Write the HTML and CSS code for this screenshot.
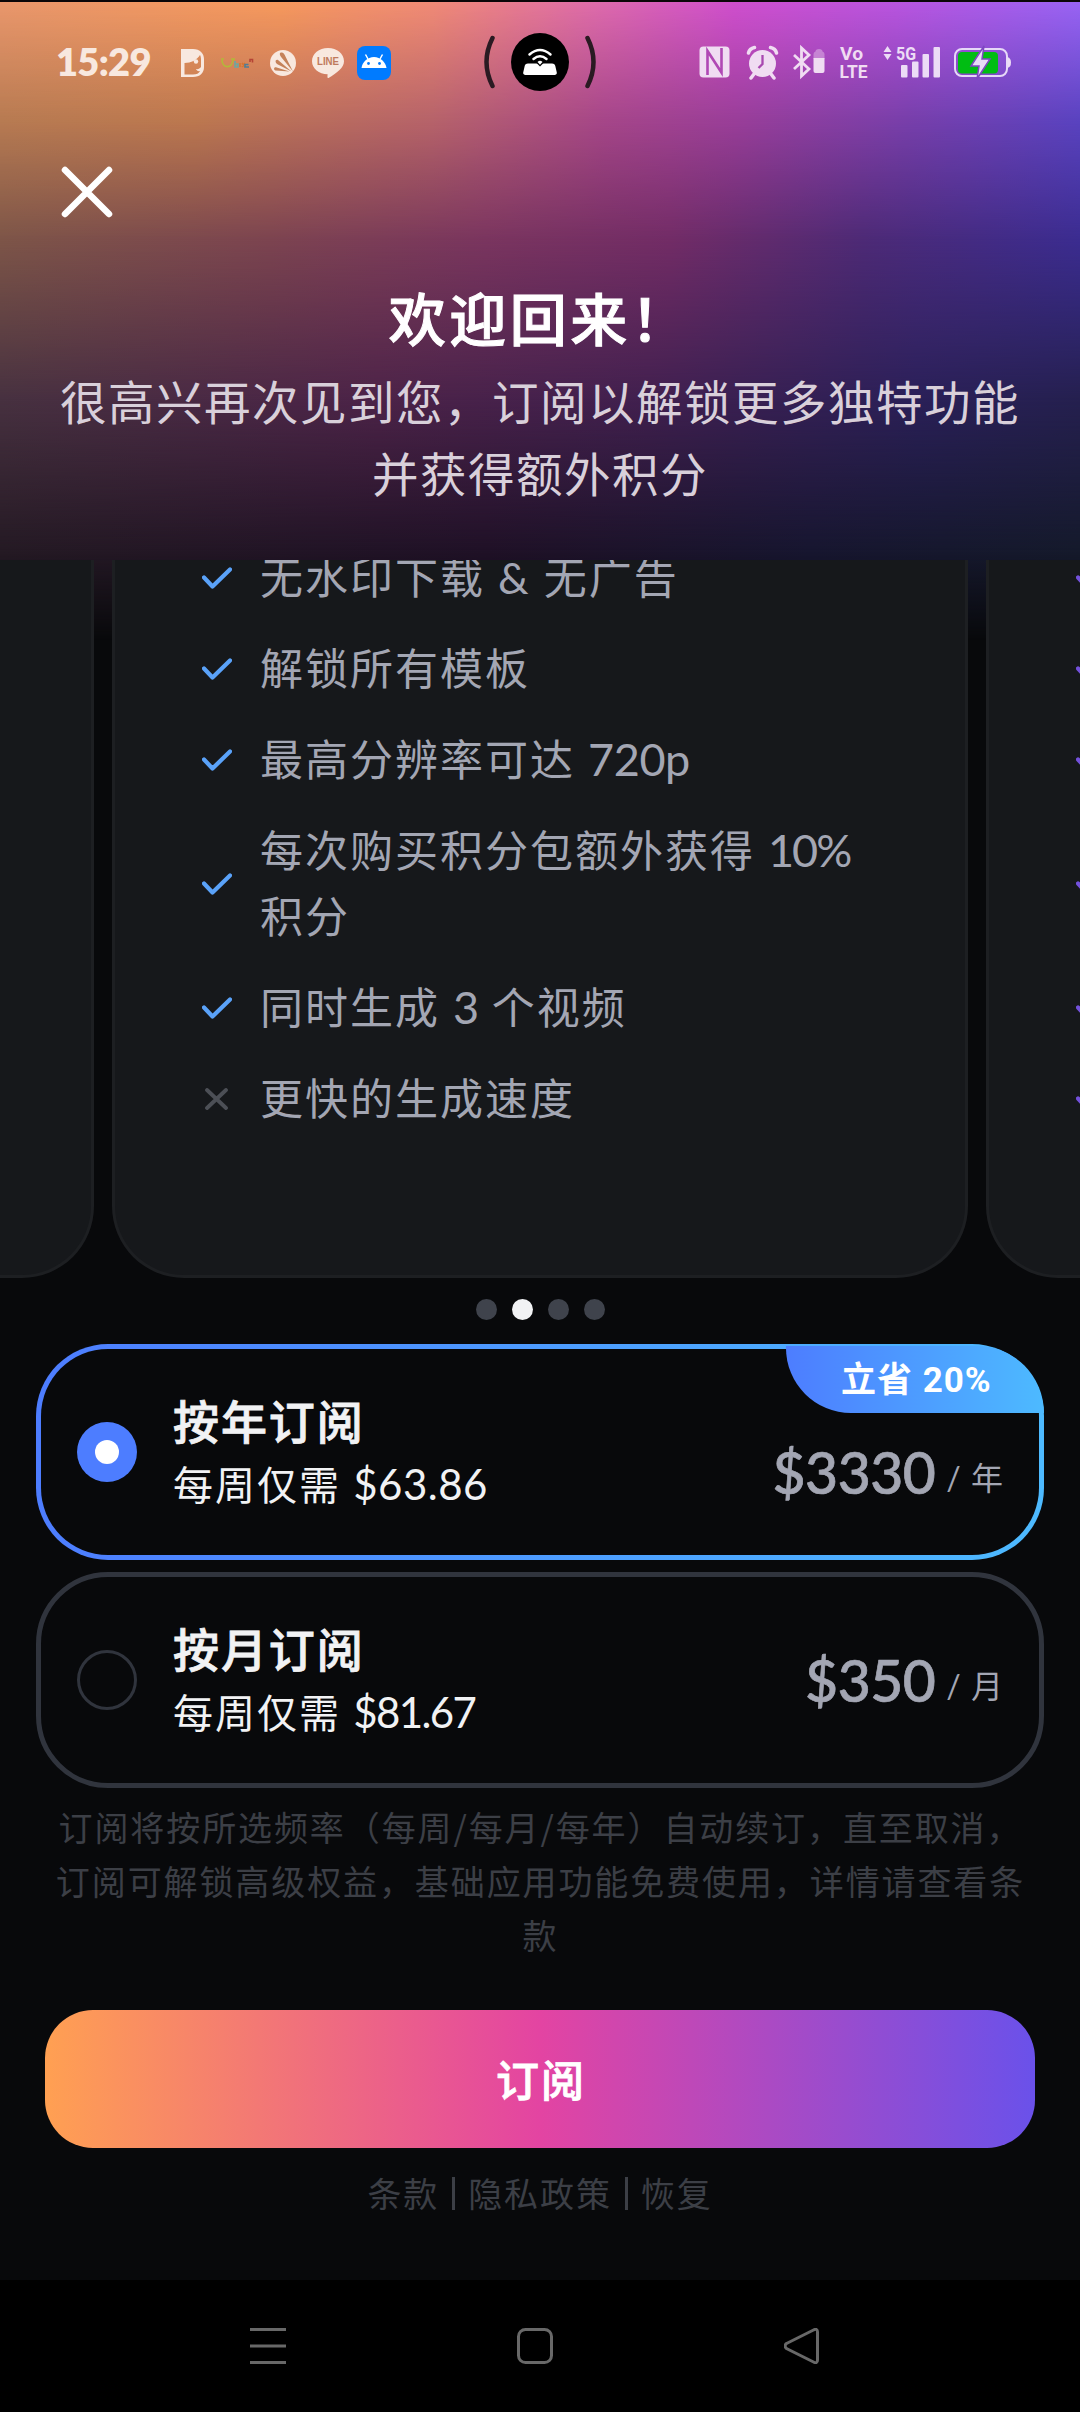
FILE: index.html
```html
<!DOCTYPE html>
<html lang="zh-CN">
<head>
<meta charset="utf-8">
<title>订阅</title>
<link rel="stylesheet" href="styles.css">
</head>
<body>
<main class="screen">
  <div class="glow"><i class="g5"></i><i class="g4"></i><i class="g3"></i><i class="g2"></i><i class="g1"></i></div>
  <header class="hero">
    <div class="status">
      <span class="clock">15:29</span>
      <svg class="notifs" width="216" height="40" viewBox="178 42 216 40">
        <g fill="#f8e8df">
          <path fill-rule="evenodd" d="M181 49h12c7 0 11 4.500 11 10v8c0 6-4 10-11 10h-12zM184.500 63v11.500h8.500c3.500 0 6-1 7-3.500-2 .5-3.500-.5-4-2 2 .5 4-.5 5-2v-8c0-1.500-.5-3-1-4-3 5-9 8-15.500 8z"/>
          <circle cx="196" cy="61.500" r="2.200"/>
          <circle cx="283" cy="63" r="13"/>
          <path d="M328 48c9 0 16 5.800 16 13.200 0 6.800-7.500 11.800-15.500 16.800-1.500.5-1-1.500-.9-3.700C319 74 312 68.500 312 61.200 312 53.800 319 48 328 48z"/>
        </g>
        <g fill="#c5825a"><path d="M293 71.500l-11.500-14c-2-2.500-2.500-5 0-5 2 0 3.200 2 4.200 4.500zM291.500 71.500l-14.500-7.500c-2-1.500-2-5 1-4zM289.500 71.500l-14-1c-2-.5-2-3.500.5-3.200z"/></g>
        <g fill="none" stroke-width="1.600"><path stroke="#b3b83a" d="M222 60c0 9 11 9 11-1M221 59l3 0M231 59l4 0"/><path stroke="#6da6a2" d="M235 61v6h3v-3h-3"/><path stroke="#d9742f" d="M240 63v4M242 63l3 4M245 63l-3 4"/><path stroke="#4f7d96" d="M248.500 64.500h-3.500v2.500h4"/><path stroke="#b54335" d="M250 62v-2.500h2.500v3"/></g>
        <text x="328" y="65.200" class="line-logo" textLength="22" lengthAdjust="spacingAndGlyphs">LINE</text>
        <rect x="357" y="46" width="34" height="34" rx="8" fill="#007bff"/>
        <path d="M361.500 68c.8-6 6-11 12.500-11s11.500 5 12.500 11z" fill="#fff"/>
        <path d="M368 59l-2.500-4.500M380 59l2.500-4.500" stroke="#fff" stroke-width="1.500"/>
        <circle cx="368.500" cy="63.500" r="1.400" fill="#007bff"/><circle cx="379.500" cy="63.500" r="1.400" fill="#007bff"/>
      </svg>
      <svg class="island" width="116" height="60" viewBox="482 32 116 60">
        <circle cx="540" cy="62" r="29"/>
        <path d="M492.500 38Q480.500 62 492.500 86M587.500 38Q599.500 62 587.500 86" fill="none" stroke="#2a1a22" stroke-width="4.500" stroke-linecap="round"/>
        <path d="M528 63.500h24c2 0 3 1 3.300 2.500l1.500 6.500c.3 1.500-.8 2.500-2.300 2.500h-29c-1.500 0-2.600-1-2.300-2.500l1.500-6.500c.3-1.500 1.300-2.500 3.300-2.500z" fill="#fff"/>
        <path d="M535 61.500a5 5 0 0 1 10 0l-5 5z" fill="#000"/>
        <path d="M529.500 54.500q10.500-9 21 0M533.500 59q6.500-5.500 13 0" fill="none" stroke="#fff" stroke-width="2.500" stroke-linecap="round"/>
        <path d="M537.500 62q2.500-2.500 5 0l-2.500 2.800z" fill="#fff"/>
      </svg>
      <svg class="sys" width="316" height="40" viewBox="697 42 316 40">
        <g fill="#f0dcf2">
          <rect x="699.500" y="46.500" width="30" height="31" rx="4"/>
          <path d="M707.500 75V51L721.500 72.500V48" fill="none" stroke="#b048b4" stroke-width="2.600"/>
          <ellipse cx="762.500" cy="63.500" rx="13.500" ry="13.500"/>
          <path d="M754 74l-3 4M771 74l3 4M748.500 53q1-4.500 6-5.500M776.500 53q-1-4.500-6-5.500" stroke="#f0dcf2" stroke-width="3.500" stroke-linecap="round" fill="none"/>
          <path d="M762.500 55v9l-4 4" fill="none" stroke="#a848b0" stroke-width="2.300"/>
          <path d="M794 55l15 14-7.500 7V48l7.500 7-15 14" fill="none" stroke="#f0dcf2" stroke-width="2.800"/>
          <path d="M813.500 54q0-2 2-2.500 0-2.500 3.500-2.500t3.500 2.500q2 .5 2 2.500v5h-11z" opacity=".4"/>
          <path d="M813.500 58h11v13q0 2-2 2h-7q-2 0-2-2z"/>
          <text x="840" y="60" class="volte" textLength="23" lengthAdjust="spacingAndGlyphs">Vo</text>
          <text x="839.500" y="77.500" class="volte" textLength="28" lengthAdjust="spacingAndGlyphs">LTE</text>
        </g>
        <g fill="#ecdcf6">
          <path d="M883.500 52l4-6 4 6zM883.500 54l4 6 4-6z"/>
          <text x="896" y="59.500" class="fiveg" textLength="20" lengthAdjust="spacingAndGlyphs">5G</text>
          <rect x="901" y="65" width="6.500" height="12.500" rx="1"/><rect x="912" y="61.500" width="6.500" height="16" rx="1"/><rect x="922.500" y="54" width="6.500" height="23.500" rx="1"/><rect x="933.500" y="47" width="6.500" height="30.500" rx="1"/>
          <rect x="955" y="49" width="52" height="27" rx="7" fill="none" stroke="#e6d8f8" stroke-width="2"/>
          <path d="M1007.500 57q3.500 1 3.500 5.500t-3.500 5.500z"/>
        </g>
        <rect x="958" y="52" width="40" height="21.500" rx="4" fill="#00bd12"/>
        <path d="M984 46l-13 20h8l-2 13 13-20h-8z" fill="#e9dcf7" stroke="#7d47c0" stroke-width="1.500"/>
      </svg>
    </div>
    <svg class="close" width="52" height="52" viewBox="0 0 52 52"><path d="M4 4l44 44M48 4L4 48" stroke="#fff" stroke-width="6.500" stroke-linecap="round"/></svg>
    <h1 class="title">欢迎回来！</h1>
    <p class="lead">很高兴再次见到您，订阅以解锁更多独特功能<br>并获得额外积分</p>
  </header>

  <svg width="0" height="0" class="defs">
    <symbol id="tick" viewBox="0 0 30 22"><path d="M2 10.500l8.500 9L28 2.500" fill="none" stroke="currentColor" stroke-width="4.200" stroke-linecap="round" stroke-linejoin="round"/></symbol>
    <symbol id="cross" viewBox="0 0 30 22"><path d="M5 2l19 18M24 2L5 20" fill="none" stroke="currentColor" stroke-width="3.800" stroke-linecap="round"/></symbol>
  </svg>

  <section class="carousel">
    <article class="card"></article>
    <article class="card">
      <ul class="features">
        <li><svg class="mark"><use href="#tick"/></svg><span>无水印下载 &amp; 无广告</span></li>
        <li><svg class="mark"><use href="#tick"/></svg><span>解锁所有模板</span></li>
        <li><svg class="mark"><use href="#tick"/></svg><span>最高分辨率可达 <b class="num">720p</b></span></li>
        <li><svg class="mark"><use href="#tick"/></svg><span>每次购买积分包额外获得 <b class="num tight">10%</b><br>积分</span></li>
        <li><svg class="mark"><use href="#tick"/></svg><span>同时生成 <b class="num">3</b> 个视频</span></li>
        <li><svg class="mark off"><use href="#cross"/></svg><span>更快的生成速度</span></li>
      </ul>
    </article>
    <article class="card">
      <ul class="features violet">
        <li><svg class="mark"><use href="#tick"/></svg></li>
        <li><svg class="mark"><use href="#tick"/></svg></li>
        <li><svg class="mark"><use href="#tick"/></svg></li>
        <li class="tall"><svg class="mark"><use href="#tick"/></svg></li>
        <li><svg class="mark"><use href="#tick"/></svg></li>
        <li><svg class="mark"><use href="#tick"/></svg></li>
      </ul>
    </article>
  </section>

  <div class="dots"><i></i><i class="on"></i><i></i><i></i></div>

  <section class="plans">
    <div class="plan selected">
      <span class="radio"></span>
      <div class="plan-text"><h2>按年订阅</h2><p>每周仅需 <span class="amount">$63.86</span></p></div>
      <div class="price"><strong>$3330</strong><small>/ 年</small></div>
      <span class="badge">立省 20%</span>
    </div>
    <div class="plan">
      <span class="radio"></span>
      <div class="plan-text"><h2>按月订阅</h2><p>每周仅需 <span class="amount tight">$81.67</span></p></div>
      <div class="price"><strong>$350</strong><small>/ 月</small></div>
    </div>
  </section>

  <p class="terms">订阅将按所选频率（每周/每月/每年）自动续订，直至取消，<br>订阅可解锁高级权益，基础应用功能免费使用，详情请查看条<br>款</p>
  <button class="cta">订阅</button>
  <div class="links"><span>条款</span><i></i><span>隐私政策</span><i></i><span>恢复</span></div>

  <nav class="navbar">
    <svg width="36" height="36" viewBox="0 0 36 36"><path d="M0 1.500h36M0 18h36M0 34.500h36"/></svg>
    <svg width="36" height="36" viewBox="0 0 36 36"><rect x="1.500" y="1.500" width="33" height="33" rx="7"/></svg>
    <svg width="36" height="36" viewBox="0 0 36 36"><path d="M2.500 15.500L29.500 2q4-2 4 2v28q0 4-4 2L2.500 20.500q-3-2.500 0-5z"/></svg>
  </nav>
</main>
</body>
</html>
```
FILE: styles.css
```css
* { box-sizing: border-box; margin: 0; padding: 0; }
body { background: #08090b; }
.screen {
  position: relative;
  width: 1080px;
  height: 2412px;
  overflow: hidden;
  display: flex;
  flex-direction: column;
  background: #08090b;
  color: #f1f2f4;
  font-family: Lato, "Noto Sans CJK SC", sans-serif;
}

/* colour wash behind the header, built from horizontal bands that fade into each other */
.glow { position: absolute; inset: 0 0 auto 0; height: 650px; }
.glow i { position: absolute; inset: 0; }
.g5 { background: linear-gradient(90deg, #251a24, #201127 45%, #171630 75%, #151a2c); mask-image: linear-gradient(#000 550px, transparent 640px); }
.g4 { background: linear-gradient(90deg, #473140, #4c2348 35%, #41204f 60%, #2a2058 85%, #25204f); mask-image: linear-gradient(#000 400px, transparent 550px); }
.g3 { background: linear-gradient(90deg, #7d5548, #7c4450 25%, #7a355f 45%, #722c66 62%, #4d2a76 80%, #3b2c90); mask-image: linear-gradient(#000 240px, transparent 400px); }
.g2 { background: linear-gradient(90deg, #b87b52, #bd784f 18%, #b7636a 40%, #a64689 56%, #9a3e99 68%, #783fab 84%, #5a43c0); mask-image: linear-gradient(#000 120px, transparent 240px); }
.g1 { background: linear-gradient(90deg, #ea976c, #f7995d 26%, #f18b76 40%, #df6cab 55%, #d04fce 68%, #ba55e0 83%, #9a64f4); mask-image: linear-gradient(#000 0, transparent 120px); }

.hero { position: relative; height: 560px; border-top: 2px solid #0b0608; display: flex; flex-direction: column; }
.status { height: 120px; display: flex; align-items: center; padding: 0 67px 0 56px; }
.clock { width: 122px; padding-bottom: 2px; font: 800 38px/40px Lato, sans-serif; letter-spacing: -.7px; color: #f8e8df; }
.notifs { margin-right: 88px; }
.sys { margin-left: 99px; }
.line-logo { font: 700 10.500px "Liberation Sans", sans-serif; fill: #c07a5c; text-anchor: middle; }
.volte { font: 700 18px Roboto, sans-serif; }
.fiveg { font: 700 18px Roboto, sans-serif; }
.close { margin: 44px 0 0 61px; }
.title { margin-top: 57px; text-align: center; font: 500 57px/82px "Noto Sans CJK SC", sans-serif; letter-spacing: 3.500px; color: #fff; -webkit-text-stroke: 1px #fff; }
.lead { margin-top: 7px; text-align: center; font: 46.500px/72px "Noto Sans CJK SC", sans-serif; letter-spacing: 1.500px; color: #d9d0da; }

.defs { position: absolute; }
.carousel { position: relative; height: 718px; display: flex; justify-content: center; gap: 18px; overflow: hidden; }
.card { flex: none; width: 856px; border: 3px solid #1d1f22; border-top: 0; border-radius: 0 0 72px 72px; background: #16181b; }
.features { list-style: none; margin-top: -15.500px; padding-left: 87px; display: flex; flex-direction: column; gap: 25.100px; font: 43px/66px Lato, "Noto Sans CJK SC", sans-serif; letter-spacing: 2px; color: #a3a6b3; }
.features li { display: flex; align-items: center; gap: 28px; min-height: 66px; }
.features .tall { min-height: 132px; }
.num { font-weight: 400; font-size: 45px; line-height: 0; letter-spacing: -.4px; }
.num.tight { letter-spacing: -2px; }
.mark { width: 30px; height: 22px; flex: none; color: #5aa2f9; }
.violet .mark { color: #7351dc; }
.mark.off { color: #4c4f56; }

.dots { display: flex; justify-content: center; gap: 15px; margin: 21px 0 24px; }
.dots i { width: 21px; height: 21px; border-radius: 50%; background: #3f434c; }
.dots .on { background: #f1f2f4; }

.plans { display: flex; flex-direction: column; gap: 12px; padding: 0 36px; }
.plan { position: relative; height: 216px; border: 5px solid #30343d; border-radius: 72px; display: flex; align-items: center; padding: 0 35px 0 36px; }
.plan.selected { border-color: transparent; background: linear-gradient(#08090b, #08090b) padding-box, linear-gradient(90deg, #4d7dff, #4dbaff) border-box; }
.radio { width: 60px; height: 60px; border: 3px solid #30343d; border-radius: 50%; display: grid; place-items: center; }
.selected .radio { border: 0; background: #4d7dff; }
.selected .radio::after { content: ""; width: 24px; height: 24px; border-radius: 50%; background: #fff; }
.plan-text { margin-left: 36px; flex: 1; }
.plan-text h2 { font: 500 46px/65px "Noto Sans CJK SC", sans-serif; letter-spacing: 1.900px; -webkit-text-stroke: .8px currentColor; }
.plan-text p { font: 40px/66px Lato, "Noto Sans CJK SC", sans-serif; letter-spacing: 2px; }
.amount { letter-spacing: .5px; font-size: 42px; line-height: 0; }
.amount.tight { letter-spacing: -1.600px; }
.price { display: flex; align-items: baseline; gap: 11px; color: #a3a6b3; }
.selected .price { margin-top: 39px; }
.price strong { font-weight: 500; font-size: 57px; letter-spacing: -.5px; -webkit-text-stroke: .7px currentColor; }
.price small { font-size: 32px; letter-spacing: 1px; word-spacing: 0; translate: 0 -4px; }
.badge { position: absolute; top: -3px; right: -5px; width: 258px; height: 67px; padding: 0 54px 0 55px; border-radius: 0 68px 0 66px; background: linear-gradient(90deg, #4d7dff, #4dbaff); color: #fff; font: 700 35px/69px Roboto, "Noto Sans CJK SC", sans-serif; letter-spacing: 1px; white-space: nowrap; }

.terms { margin-top: 12px; padding-left: 1px; text-align: center; font: 34px/54px "Noto Sans CJK SC", sans-serif; letter-spacing: 1.900px; color: #3c3f46; white-space: nowrap; }
.cta { margin: 48px 45px 0; height: 138px; padding: 0 0 3px 2px; border: 0; border-radius: 48px; background: linear-gradient(90deg, #ffa052, #e344a2 50%, #6a51ea); color: #fff; font: 500 43px/60px "Noto Sans CJK SC", sans-serif; letter-spacing: 2px; -webkit-text-stroke: .8px currentColor; }
.links { margin-top: 19px; height: 52px; display: flex; justify-content: center; align-items: center; gap: 13px; font: 34px/52px "Noto Sans CJK SC", sans-serif; letter-spacing: 1.900px; color: #3c3f46; }
.links i { width: 3px; height: 33px; background: #3c3f46; }
.navbar { margin-top: auto; height: 132px; padding: 0 260px 0 250px; background: #000; display: flex; align-items: center; justify-content: space-between; }
.navbar svg { fill: none; stroke: #686868; stroke-width: 3; }
```
